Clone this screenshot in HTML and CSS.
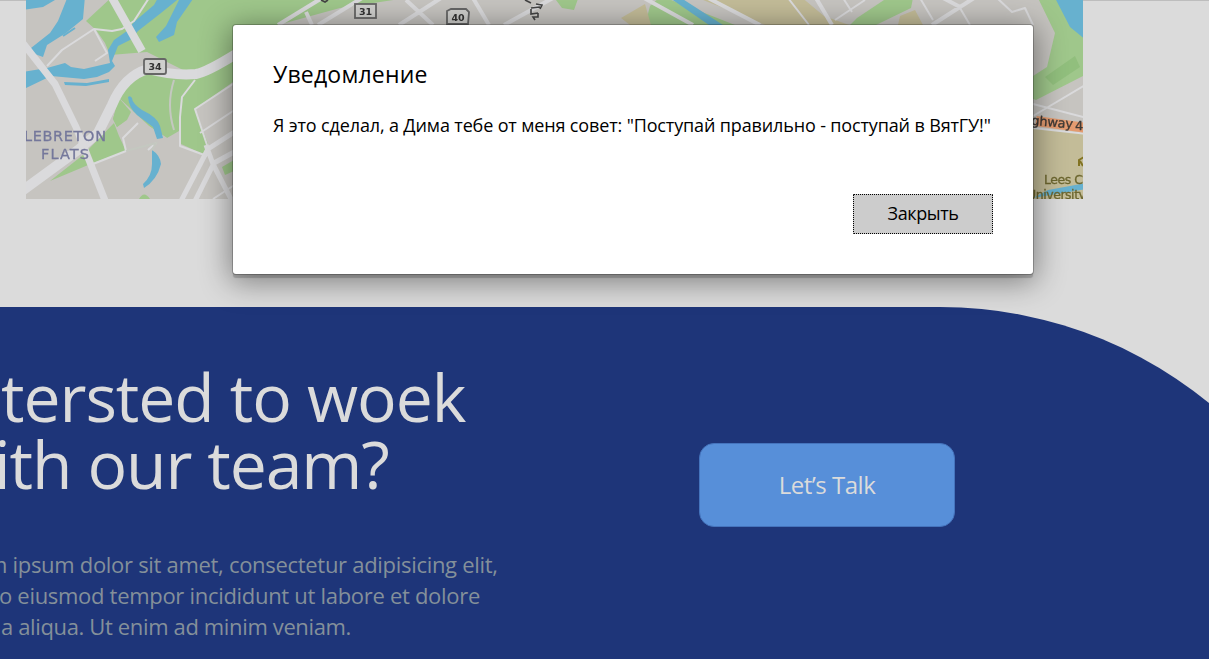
FILE: index.html
```html
<!DOCTYPE html>
<html lang="ru">
<head>
<meta charset="utf-8">
<title>Let's Talk</title>
<link rel="stylesheet" href="styles.css">
</head>
<body>
<main class="page">
  <svg class="map" viewBox="26 0 1057 199">
    <rect class="land" x="26" y="0" width="1057" height="199"/>
    <g class="soft">
    <g class="park">
      <path d="M113 -4H420L340 8L278 25L233 51V82L195 109L208 144L203 154L181 144L179 131L167 138L149 126L119 98L139 73L187 72L147 52L110 55L105 43L96 30L86 21Z"/>
      <path d="M119 98L149 126L127 119L117 127L113 119ZM114 123L119 136L126 151L93 163L50 181L83 155ZM222 167L234 160V171L225 175ZM139 199Q144 190 150 199Z"/>
      <path d="M553 -4H579L574 10L562 8ZM661 -4L735 25H645L650 6ZM857 18L887 -2H913L911 8L876 25H850Z"/>
      <path d="M1037 -4H1056L1087 39V74L1036 100L1033 99V76L1047 67L1055 33Z"/>
    </g>
    <path class="land" d="M119 98L150 127L167 138L160 141L126 151L119 128L127 119Z"/>
    <path class="park" d="M119 98L131 112L127 120L117 127L113 119Z"/>
    <path class="park-dark" d="M1045 77L1075 56L1080 67L1053 85Z"/>
    <g class="sand">
      <path d="M621 18L645 4L651 25H630ZM693 -4H800L824 16L849 25H765L741 15ZM900 16L915 10L923 25H898Z"/>
      <path d="M1033 127L1087 133V203H1033Z"/>
    </g>
    <g class="water">
      <path d="M22 -4H55V0L43 7L22 10ZM68 -4H85L83 19L66 33L47 45L43 57L32 53L31 48L50 33L58 21Z"/>
      <path d="M22 72L47 68L65 63L71 67L84 69L110 63L108 50L114 40L127 31L134 22L154 5L159 -4H182L161 13L138 31L130 40L118 46L112 61L115 66L109 72L97 77L84 79L51 76L22 90Z"/>
      <path d="M181 -4H195L177 22L174 35L159 42L156 37L166 26Z"/>
      <path d="M64 82L87 83L109 79V82L86 86L65 85Z"/>
      <path d="M128 97Q130 95 132 98Q132 103 142 110Q157 117 160 126L163 138L157 139L153 127L137 115Q129 108 128 97Z"/>
      <path d="M152 150Q160 155 161 164Q157 180 144 188L143 184Q152 176 152 164Z"/>
      <path d="M667 -4H678L723 25H709ZM1054 -4H1087V41L1070 27ZM1048 190L1087 183V189L1033 198Z"/>
    </g>
    <path class="stream" d="M63 36L75 28"/>
    <g class="road">
      <path class="w8" d="M111 -4L142 51"/>
      <path class="w10" d="M22 191L78 150L98 133L112 105Q124 76 148 69Q174 76 196 74Q207 72 236 54"/>
      <path class="w7" d="M22 42L55 84L76 127L106 203"/>
      <path class="w6" d="M180 203L208 149L236 131M194 203L214 163L236 151M206 145L213 164L233 203"/>
      <path class="w5" d="M278 25L322 -2M306 12L312 25M318 25L362 -2M399 25L441 -2M406 0L433 25M473 -2L489 25M504 25L553 -2M644 -2L693 25M708 -2L760 25M816 -2L832 25M932 25L974 -2M943 -2L962 8"/>
      <path class="w2" d="M149 -2L134 21L122 29L112 31L94 29L62 50L47 66M94 29L107 53L95 61M195 80L182 97L180 117V146L207 156M236 82L195 109L207 145M200 133L236 109M138 123L123 138L126 151L93 164M156 143L148 150M788 -2L809 25M835 20L865 0M843 -2L852 12M920 -2L933 20M960 8L970 25M997 -2L1012 12L1025 8L1033 25M1033 116L1087 84M1033 104L1087 118M1033 128L1087 134M213 199L236 184"/>
    </g>
    <path class="trail" d="M174 80Q166 105 174 130M126 151L156 143L152 150"/>
    <path class="highway" d="M1036 121L1087 128"/>
    <g class="shield">
      <rect x="144" y="59" width="22" height="15" rx="2"/><text x="155" y="70">34</text>
      <rect x="355" y="4" width="21" height="14"/><text x="365.5" y="14.5">31</text>
      <path d="M447 11L451 9H466L469 12L468 24H447Z"/><text x="458" y="20.5">40</text>
    </g>
    <path class="mark" d="M321 0L325 2L328 0M525 0L531 3M531 9V14L538 13M531 8L540 7M536 4L542 5L540 9M538 13V17H533L535 20"/>
    <g class="district">
      <text x="24" y="141" textLength="82">LEBRETON</text>
      <text x="41" y="158.500" textLength="48">FLATS</text>
    </g>
    <g class="street"><text x="1031" y="125" textLength="42" transform="rotate(5 1033 124)">ghway</text><text x="1075" y="130">4</text></g>
    <g class="campus"><text x="1044" y="184" textLength="39">Lees C</text><text x="1027" y="199" textLength="59">University</text></g>
    <path class="cap" d="M1079 166V160L1084 157M1080 161L1083 166"/>
    </g>
  </svg>

  <section class="cta">
    <div class="cta-copy">
      <h1 class="cta-title"><span class="line t1">tersted to woek</span><span class="line t2">ith our team?</span></h1>
      <p class="cta-text"><span class="line p1">m ipsum dolor sit amet, consectetur adipisicing elit,</span><span class="line p2">o eiusmod tempor incididunt ut labore et dolore</span><span class="line p3">a aliqua. Ut enim ad minim veniam.</span></p>
    </div>
    <button class="talk">Let’s Talk</button>
  </section>

  <div class="dialog" role="dialog">
    <h2 class="dialog-title">Уведомление</h2>
    <p class="dialog-text">Я это сделал, а Дима тебе от меня совет: "Поступай правильно - поступай в ВятГУ!"</p>
    <button class="close">Закрыть</button>
  </div>
</main>
</body>
</html>
```
FILE: styles.css
```css
* { box-sizing: border-box; }
body { margin: 0; font-family: "Open Sans", "Noto Sans", sans-serif; }
.page { position: relative; width: 1209px; height: 659px; overflow: hidden; background: #dbdbdb; box-shadow: inset 0 1px #bdbdbd; }

.map { display: block; width: 1057px; height: 199px; margin-left: 26px; overflow: hidden; }
.soft { filter: blur(0.5px); }
.land { fill: #c6c4c0; }
.park { fill: #9fc78b; }
.park-dark { fill: #91bf7d; }
.sand { fill: #c3bc98; }
.water { fill: #67b1cf; }
.stream { stroke: #67b1cf; stroke-width: 2; }
.road { fill: none; stroke: #dadadc; stroke-linejoin: round; }
.w10 { stroke-width: 10; }
.w8 { stroke-width: 8; }
.w7 { stroke-width: 7; }
.w6 { stroke-width: 5; }
.w5 { stroke-width: 4; }
.w2 { stroke-width: 2; }
.trail { fill: none; stroke: #c4c8c0; stroke-width: 2; }
.highway { stroke: #e49b70; stroke-width: 10; }
.shield { fill: #cfcfcd; stroke: #666; stroke-width: 1.8; }
.shield text { fill: #333; stroke: none; font: bold 9.5px "DejaVu Sans", sans-serif; text-anchor: middle; }
.mark { fill: none; stroke: #444; stroke-width: 1.6; }
.district { fill: #74779b; stroke: #74779b; stroke-width: 0.3; font: 14.5px "DejaVu Sans", sans-serif; }
.street { fill: #3f3a36; stroke: #3f3a36; stroke-width: 0.3; font: 13px "DejaVu Sans", sans-serif; }
.campus { fill: #6c662f; stroke: #6c662f; stroke-width: 0.3; font: 12.5px "DejaVu Sans", sans-serif; }
.cap { fill: none; stroke: #827322; stroke-width: 2; }

.cta { display: flex; align-items: flex-start; width: 1365px; height: 850px; margin-top: 108px; border-top-right-radius: 425px; background: #1e3579; }
.cta-copy { flex: none; width: 699px; padding-top: 56px; }
.line { display: block; width: max-content; white-space: nowrap; }
.cta-title { margin: 0; color: #dbdbdb; font-size: 66px; font-weight: 400; line-height: 67px; }
.cta-text { margin: 52px 0 0; color: #84909a; font-size: 22px; line-height: 31px; }
.t1 { margin-left: 1px; letter-spacing: -1.05px; }
.t2 { margin-left: -6px; letter-spacing: -1.1px; }
.p1 { margin-left: -13px; letter-spacing: -0.3px; }
.p2 { margin-left: -1px; letter-spacing: -0.3px; }
.p3 { margin-left: 1px; letter-spacing: -0.36px; }
.talk { width: 256px; height: 84px; margin-top: 136px; padding: 0 0 2px; border: 1px solid #4574bd; border-radius: 15px; background: #578fd9; color: #dbdbdb; font: 24px "Open Sans", sans-serif; letter-spacing: -0.5px; }

.dialog { position: absolute; left: 233px; top: 25px; display: flex; flex-direction: column; width: 800px; height: 249px; padding: 31px 40px 40px; border-radius: 3px; background: #fff; box-shadow: 0 0 0 1px rgba(0,0,0,.22), 0 4px 1px rgba(0,0,0,.18), 0 5px 30px 3px rgba(0,0,0,.42); color: #000; }
.dialog-title { width: max-content; margin: 0; font-size: 23px; font-weight: 400; line-height: 36px; letter-spacing: 0.2px; }
.dialog-text { width: max-content; margin: 19px 0 0; font-size: 18px; line-height: 28px; white-space: nowrap; letter-spacing: -0.14px; }
.close { align-self: flex-end; width: 140px; height: 40px; margin-top: auto; padding: 0 0 2px; border: 1px dotted #000; border-radius: 1px; background: #ccc; color: #000; font: 18px "Open Sans", sans-serif; letter-spacing: -0.4px; }
```
